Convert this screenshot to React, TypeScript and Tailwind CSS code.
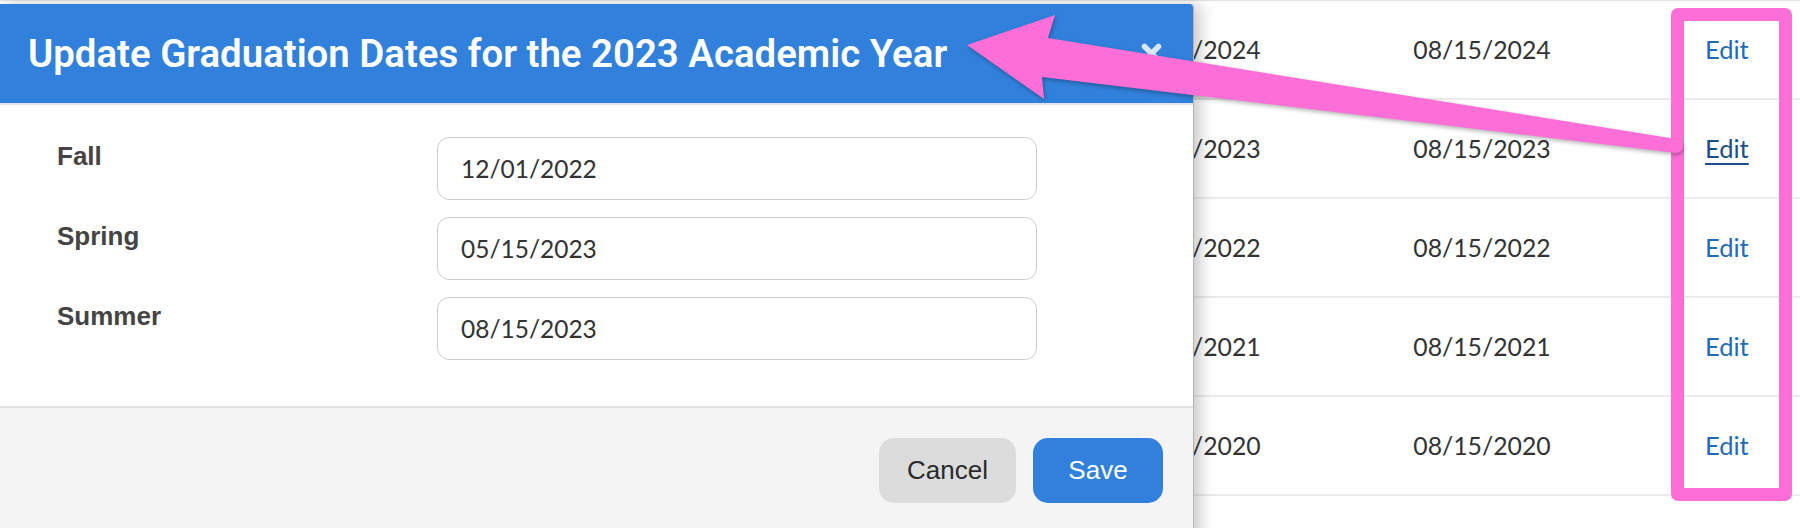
import React from "react";

const rows = [
  { start: "01/16/2024", end: "08/15/2024", hover: false },
  { start: "01/17/2023", end: "08/15/2023", hover: true },
  { start: "01/18/2022", end: "08/15/2022", hover: false },
  { start: "01/19/2021", end: "08/15/2021", hover: false },
  { start: "01/20/2020", end: "08/15/2020", hover: false },
];

const terms = [
  { label: "Fall", value: "12/01/2022" },
  { label: "Spring", value: "05/15/2023" },
  { label: "Summer", value: "08/15/2023" },
];

const CloseIcon = () => (
  <svg width="21" height="21" viewBox="0 0 21 21" className="block">
    <path d="M3.5 3.5 L17.5 17.5 M17.5 3.5 L3.5 17.5" stroke="#d9e6f7" strokeWidth="5.5" strokeLinecap="round" />
  </svg>
);

export default function App() {
  return (
    <div className="relative w-[1800px] h-[528px] overflow-hidden bg-white font-['Lato',sans-serif]">
      {/* table behind the dialog */}
      <div className="h-[1px] bg-[#e4e4e4] relative">
        <div className="absolute left-0 -top-[25px] text-[26px] leading-[30px] text-[#1d3a63] font-['Liberation_Sans',sans-serif]">Fall 2020</div>
      </div>
      {rows.map((r) => (
        <div key={r.end} className="flex items-center h-[99px] border-b-2 border-[#ececec] text-[24.8px] text-[#333333]">
          <div className="w-[1046px]" />
          <div className="w-[292px] text-center">{r.start}</div>
          <div className="w-[288px] text-center">{r.end}</div>
          <div className="w-[174px] pl-[79px] text-[25.5px]">
            <span className={r.hover ? "text-[#1d4f87] underline underline-offset-[5px] decoration-2" : "text-[#1f6bb6]"}>Edit</span>
          </div>
        </div>
      ))}

      {/* dialog */}
      <div className="absolute left-0 top-[4px] w-[1194px] h-[580px] bg-white border-r border-[#b5b5b5] rounded-tr-[4px] shadow-[6px_0_16px_rgba(0,0,0,0.22)] overflow-hidden">
        <div className="h-[101px] bg-[#3181dc] border-b-2 border-[#dfe4ea] flex items-center justify-between pl-[28px] pr-[31px]">
          <h2 className="text-white text-[38.4px] font-semibold font-['Roboto',sans-serif]">
            Update Graduation Dates for the 2023 Academic Year
          </h2>
          <CloseIcon />
        </div>
        <div className="pt-[32px] pb-[46px] pl-[57px] flex flex-col gap-[17px]">
          {terms.map((t) => (
            <div key={t.label} className="flex">
              <label className="w-[380px] pt-[4px] text-[26px] leading-[30px] font-bold text-[#444444] font-['Liberation_Sans',sans-serif]">
                {t.label}
              </label>
              <input
                readOnly
                value={t.value}
                className="w-[600px] h-[63px] border-[1.5px] border-[#cdcdcd] rounded-[12px] pl-[23px] text-[24.5px] text-[#333333] outline-none font-['Lato',sans-serif]"
              />
            </div>
          ))}
        </div>
        <div className="h-[200px] border-t-2 border-[#e3e3e3] bg-[#f4f4f4] flex justify-end items-start gap-[17px] pt-[30px] pr-[30px] font-['Liberation_Sans',sans-serif]">
          <button className="w-[137px] h-[65px] rounded-[15px] bg-[#dcdcdc] text-[26px] text-[#2b2b2b]">Cancel</button>
          <button className="w-[130px] h-[65px] rounded-[15px] bg-[#3181dc] text-[26px] text-white">Save</button>
        </div>
      </div>

      {/* annotation */}
      <div className="absolute left-[1671px] top-[8px] w-[121px] h-[493px] border-[13px] border-[#fd6fd6] rounded-[7px]" />
      <svg
        className="absolute left-0 top-0 pointer-events-none drop-shadow-[1px_2px_2px_rgba(0,0,0,0.3)]"
        width="1800"
        height="528"
        viewBox="0 0 1800 528"
      >
        <path
          d="M967 45 L1055 15 L1048 38 L1676 139 A7 7 0 0 1 1676 153 L1042 77 L1044 99 Z"
          fill="#fd6fd6"
        />
      </svg>
    </div>
  );
}
